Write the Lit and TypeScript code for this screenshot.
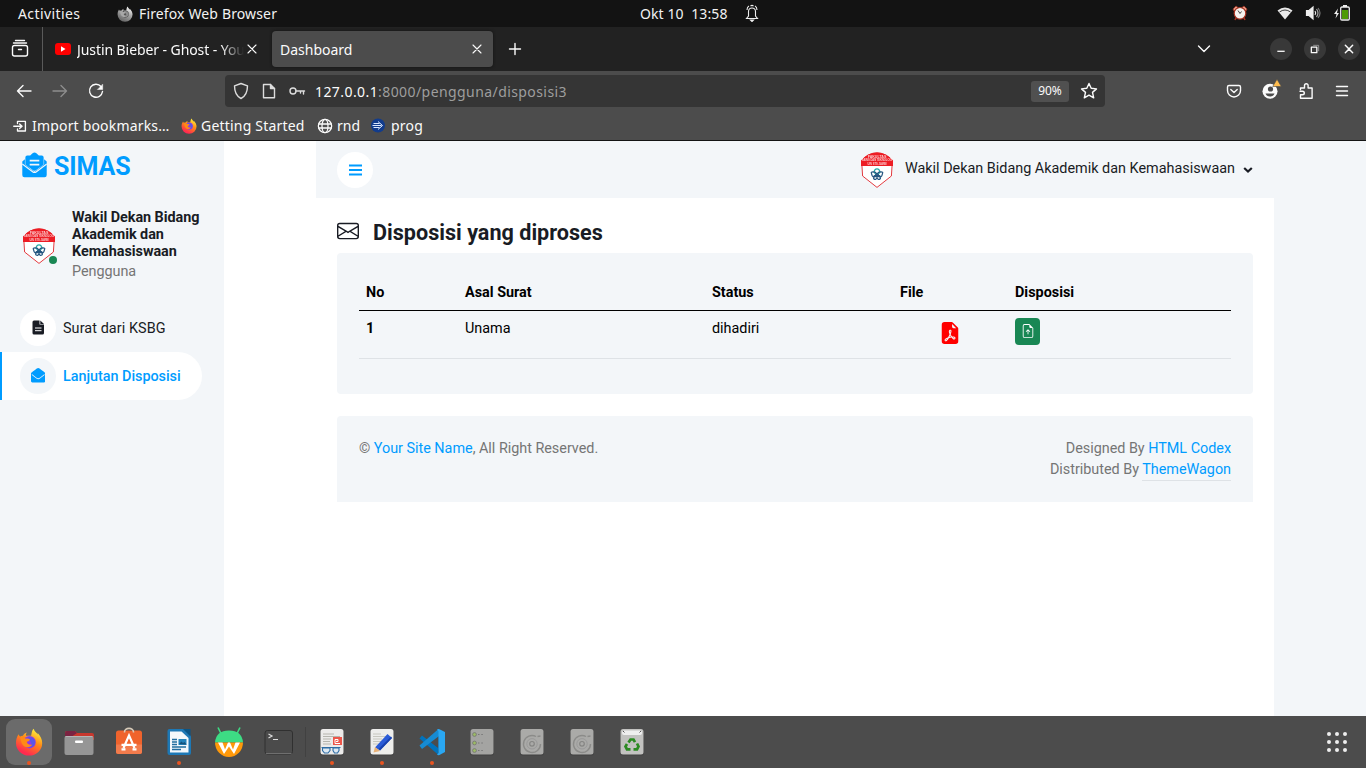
import { LitElement, html, css, svg } from "lit";
import { customElement } from "lit/decorators.js";

const firefox = (id: string, size: number, gray = false) => {
  const c = gray
    ? ["#f2f2f2", "#a8a8a8", "#6e6e6e", "#555", "#8d8d8d"]
    : ["#ffe83a", "#ff8a16", "#ff2a50", "#8c3bea", "#5a55e8"];
  return html`<svg width=${size} height=${size} viewBox="0 0 28 28">
    <defs>
      <linearGradient id=${id} x1=".8" y1="0" x2=".3" y2="1">
        <stop offset=".08" stop-color=${c[0]} /><stop offset=".45" stop-color=${c[1]} /><stop offset=".9" stop-color=${c[2]} />
      </linearGradient>
    </defs>
    <path fill="url(#${id})" d="M3.5 6.2c.4 1 .9 1.6 1.6 2.2.8-.5 1.800-.8 2.800-.7 1-1.700 2.400-2.600 4-3.100-1 1.200-1.200 2.300-.8 3.200h5c.8-3 .6-5.400 2.700-7 .4 2.600 2.400 3.600 4.100 5.600-.1-.7-.2-1.100-.4-1.700 3 3.300 4.700 6.400 4.700 10.300A13 12.500 0 0 1 1 15c0-3.500.9-6.200 2.500-8.800z" />
    <circle cx="14.500" cy="14.200" r="6.200" fill=${c[3]} />
    <path d="M12 9.500c3-1.600 7 .2 8 3.800.7 3.300-2 6.500-5.500 6.500 3.500-2.500 2-6-2.500-10.300z" fill=${c[4]} />
    <path d="M5 9.500c2-.7 4.500-.3 5.700 1.200 1.700-.2 3.300-.1 4.300.7-.4 1.300-1.800 1.900-3.200 2.400.3 2.300 2.700 3.600 5.500 2.700-2 3.500-7.200 3.700-9.400.6C6.200 15 6 12 5 9.500z" fill=${c[1]} />
  </svg>`;
};

const line = (content: unknown, size = 24, width = 1.4) =>
  html`<svg width=${size} height=${size} viewBox="0 0 24 24" fill="none" stroke="currentColor"
    stroke-width=${width} stroke-linecap="round" stroke-linejoin="round">${content}</svg>`;

const emblem = () => html`<svg width="36" height="36" viewBox="0 0 36 36">
  <path d="M2.600 8.500Q9 1 18 .8 27 1 33.400 8.500L32.400 24 18 35.400 3.600 24z" fill="#fff" stroke="#e33a40" stroke-width="1" />
  <path d="M2 14V8.500Q9 .5 18 .5T34 8.500V14z" fill="#ed1c24" />
  <text x="18" y="5.700" font-size="3.600" class="seal">FAKULTAS</text>
  <text x="18" y="9.400" font-size="2.600" class="seal">SAINS DAN TEKNOLOGI</text>
  <text x="18" y="12.700" font-size="2.600" class="seal">UIN STS JAMBI</text>
  <g fill="none" stroke="#24557f" stroke-width="1.200">
    <circle cx="18" cy="23" r="1.500" /><path d="M15 20.500Q15.500 16.800 18 16.800T21 20.500Q20 22 18 22T15 20.500z" stroke="#26a9a5" />
    <path d="M12.500 21.500Q11.500 20 14 19.800T18 22q-1 3-3 3t-2.500-3.500zM23.500 21.500q1-1.500-1.500-1.700T18 22q1 3 3 3t2.500-3.500zM14.500 25.500q0-2.500 3.500-2.500.500 3.500-1.500 4.500-2 0-2-2zM21.500 25.500q0-2.500-3.500-2.500-.500 3.500 1.500 4.500 2 0 2-2z" />
  </g>
</svg>`;

const letterIcon = (size: number) => html`<svg width=${size} height=${size} viewBox="0 0 512 512" fill="currentColor">
  <path d="M512 464c0 26.500-21.500 48-48 48H48c-26.500 0-48-21.500-48-48V200.700a48 48 0 0 1 18.400-37.800C43.200 143.500 64.500 127 164.200 54.600 185.400 39.200 227.400-.4 256 0c28.600-.4 70.600 39.200 91.800 54.600C447.500 127 468.800 143.500 493.600 162.900A48 48 0 0 1 512 200.700z" />
  <path fill="#f3f6f9" d="M448 240c-26 22-55 43-100 76-21 15-59 50-92 50s-71-35-92-50C119 283 90 262 64 240l-26-20-16 24c30 25 72 58 125 96 24 18 63 62 109 62s85-44 109-62c53-38 95-71 125-96l-16-24z" />
</svg>`;

@customElement("desktop-panel")
class DesktopPanel extends LitElement {
  static styles = css`
    :host { display: flex; height: 27px; background: #131313; color: #f2f2f2; align-items: center;
      font: 14px/27px "Noto Sans", sans-serif; white-space: pre; }
    svg { display: block; }
    span, svg { flex: none; }
    .activities { margin-left: 18px; width: 99px; letter-spacing: .4px; }
    .app { margin-left: 6px; width: 501px; letter-spacing: .14px; }
    .clock { width: 104px; letter-spacing: .1px; margin-top: -1px; }
    .bell { width: 488px; margin-top: -1px; }
    .alarm { width: 45px; margin-top: -2px; }
    .wifi { width: 28px; margin-top: -2px; }
    .sound { width: 28px; margin-top: -2px; }
    .battery { margin-top: -1px; }
  `;
  render() {
    return html`<span class="activities">Activities</span>${firefox("ffg", 16, true)}<span class="app">Firefox Web Browser</span><span class="clock">Okt 10  13:58</span><span class="bell"><svg width="16" height="18" viewBox="0 0 16 18" fill="none" stroke="#eee" stroke-width="1.100">
        <path d="M2.500 14.500h11L11.500 12V7.500C11.500 5 10 4 8 4S4.500 5 4.500 7.500V12zM3 6Q3 3 5 2M13 6Q13 3 11 2M6.500 2Q8 .8 9.500 2" /><path d="M6.500 16h3l-1.500 1.500z" fill="#eee" /></svg></span><span class="alarm"><svg width="16" height="16" viewBox="0 0 16 16">
        <path d="M1 4l3-3 2 1.500L2 6zM15 4l-3-3-2 1.500L14 6z" fill="#e99a86" stroke="#9b3322" stroke-width=".8" />
        <path d="M4 13l-1 2M12 13l1 2" stroke="#a83220" stroke-width="1.600" />
        <circle cx="8" cy="8.300" r="5.800" fill="#f4f2ee" stroke="#a83220" stroke-width="1.200" />
        <path d="M6 5.500l2 3 1.500-2" stroke="#444" fill="none" /></svg></span><span class="wifi"><svg width="16" height="16" viewBox="0 0 16 16"><path d="M.5 5.500Q8-.5 15.500 5.500L8 14.500z" fill="#e9e9e9" /><path d="M2.500 7Q8 3 13.500 7" fill="none" stroke="#131313" stroke-width=".8" /></svg></span><span class="sound"><svg width="16" height="16" viewBox="0 0 16 16" fill="none" stroke="#eee" stroke-width="1.200">
        <path d="M1.500 5.500H4L8 2v12L4 10.500H1.500z" fill="#eee" /><path d="M10 6q1.500 2 0 4" /><path d="M11.500 4q3 4 0 8" stroke="#aaa" /><path d="M13 3q4 5 0 10" stroke="#777" /></svg></span><svg class="battery" width="18" height="16" viewBox="0 0 18 16"><path d="M5 3.500L1 9h2.500L2.500 13.500 6 8H4z" fill="#eee" /><rect x="7.700" y="2" width="8.600" height="13" rx="1.200" fill="none" stroke="#eee" stroke-width="1.300" /><path d="M10 0h4v2h-4z" fill="#eee" /><path d="M9 5h6v9H9z" fill="#4e9a06" /></svg>`;
  }
}

@customElement("browser-chrome")
class BrowserChrome extends LitElement {
  static styles = css`
    :host { display: block; color: #fbfbfb; font: 14px/20px "Noto Sans", sans-serif; white-space: nowrap; }
    svg { display: block; flex: none; }
    .tabs { height: 44px; background: #222; display: flex; align-items: center; }
    .tabs > span { flex: none; }
    .recent { width: 43px; height: 44px; border-right: 1px solid #5a5a5a; display: flex; align-items: center; padding-left: 8px; box-sizing: border-box; }
    .tab { display: flex; align-items: center; height: 36px; box-sizing: border-box; }
    .name { flex: none; padding-top: 1px; }
    .first { width: 228px; padding-left: 12px; }
    .first .name { margin: 0 -6px 0 6px; width: 169px; letter-spacing: -.08px;
      mask-image: linear-gradient(90deg, #000 144px, transparent 167px); }
    .active { width: 221px; background: #4c4c4c; border-radius: 4px; padding-left: 8px; margin-left: 1px; box-shadow: 0 0 3px #111; }
    .active .name { width: 185px; letter-spacing: 0; }
    .plus { margin-left: 10px; width: 689px; }
    .chev { width: 78px; }
    .round { width: 22px; height: 22px; border-radius: 50%; background: #383838; margin-right: 12px; display: grid; place-items: center; }
    .nav { height: 70px; box-sizing: border-box; background: #4c4c4c; border-bottom: 1px solid #141414; }
    .tools { display: flex; align-items: center; height: 40px; padding-left: 12px; }
    .step { width: 36px; flex: none; }
    .dim { color: #8d8d8d; }
    .reload { width: 141px; flex: none; }
    .url { width: 880px; height: 32px; border-radius: 4px; background: #353535; display: flex; align-items: center; box-sizing: border-box; padding-left: 4px; margin-right: 117px; flex: none; }
    .slot { width: 28px; color: #ddd; }
    .address { color: #9e9e9e; width: 716px; margin-left: 2px; letter-spacing: .42px; padding-top: 1px; }
    .address b { color: #fbfbfb; font-weight: 400; }
    .zoom { width: 38px; height: 21px; border-radius: 3px; background: #505050; font-size: 12px; text-align: center; margin-right: 8px; }
    .marks { display: flex; align-items: center; height: 29px; padding-left: 10px; }
    .marks span { flex: none; margin-left: 4px; }
    .marks .m1 { width: 149px; letter-spacing: .18px; margin-left: 2px; }
    .m2 { width: 116px; letter-spacing: .2px; }
    .m3 { width: 34px; }
    .m4 { letter-spacing: .2px; }
  `;
  render() {
    const cross = svg`<path d="M8 8l8 8M16 8l-8 8" />`;
    return html`
      <div class="tabs">
        <span class="recent">${line(svg`<rect x="4.500" y="8.500" width="15" height="10.500" rx="2" /><path d="M5.500 6h13M7.500 3.500h9M10.500 12.500h3" />`)}</span>
        <span class="tab first"><svg width="16" height="12" viewBox="0 0 16 12"><rect width="16" height="12" rx="3" fill="#f00" /><path d="M6 3.300v5.400L10.500 6z" fill="#fff" /></svg>
          <span class="name">Justin Bieber - Ghost - You</span>${line(cross, 24, 1.1)}</span>
        <span class="tab active"><span class="name">Dashboard</span>${line(cross, 24, 1.1)}</span>
        <span class="plus">${line(svg`<path d="M12 6.500v11M6.500 12h11" />`)}</span>
        <span class="chev">${line(svg`<path d="M6.500 9l5.500 5.500L17.500 9" />`)}</span>
        <span class="round">${line(svg`<path d="M8 14.500h8" stroke-linecap="butt" />`, 22, 1.4)}</span>
        <span class="round">${line(svg`<path d="M8 10h6v6H8z" /><path d="M10.500 8H16v6" stroke="#999" stroke-width="1" />`, 22)}</span>
        <span class="round">${line(svg`<path d="M8 8l8 8M16 8l-8 8" />`, 22, 1.6)}</span>
      </div>
      <div class="nav">
        <div class="tools">
          <span class="step">${line(svg`<path d="M19 12H5.500M11 6.500L5.500 12l5.500 5.500" />`)}</span>
          <span class="step dim">${line(svg`<path d="M5 12h13.500M13 6.500l5.500 5.500-5.500 5.500" />`)}</span>
          <span class="reload">${line(svg`<path d="M17 7.500a6.500 6.500 0 1 0 1.500 5" /><path d="M18.700 5.500v5h-5z" fill="currentColor" stroke-width=".5" />`)}</span>
          <div class="url">
            <span class="slot">${line(svg`<path d="M12 4.500l6.500 2.300c0 6-2 10.500-6.500 12.700C7.500 17.300 5.500 12.800 5.500 6.800z" />`)}</span>
            <span class="slot">${line(svg`<path d="M6.500 5.500h7l4 4v9.300h-11z" /><path d="M13.500 5.500v4h4" fill="currentColor" />`)}</span>
            <span class="slot">${line(svg`<circle cx="8" cy="12" r="3" /><path d="M11 12h8.500M18.500 12v3M15.500 12v2" />`)}</span>
            <span class="address"><b>127.0.0.1</b>:8000/pengguna/disposisi3</span>
            <span class="zoom">90%</span>
            ${line(svg`<path d="M12 4.500l2.200 4.800 5.300.6-4 3.500 1.200 5.400-4.700-2.700-4.700 2.700 1.200-5.400-4-3.500 5.300-.6z" />`)}
          </div>
          <span class="step">${line(svg`<path d="M7 6.500h10a1.500 1.500 0 0 1 1.500 1.500v3.500a6.500 6.500 0 0 1-13 0V8A1.500 1.500 0 0 1 7 6.500z" /><path d="M8.800 10.500l3.200 3 3.200-3" />`)}</span>
          <span class="step"><svg width="24" height="24" viewBox="0 0 24 24"><circle cx="12" cy="12.200" r="7.500" fill="#fbfbfb" /><circle cx="12.500" cy="10" r="2.600" fill="#4c4c4c" /><path d="M7.500 14.500h9q-1 3-4.500 3t-4.500-3z" fill="#4c4c4c" /><path d="M19 .3l4.300 7.200h-8.600z" fill="#ffbd4f" stroke="#4c4c4c" stroke-width=".6" /></svg></span>
          <span class="step">${line(svg`<path d="M6.500 10.500V9h4V6.500a1.800 1.800 0 0 1 3.600 0V9h4v10.200H6.500v-3.400h2a1.800 1.800 0 0 0 0-3.600H6" />`)}</span>
          <span class="step">${line(svg`<path d="M6.500 7.500h11M6.500 12h11M6.500 16.500h11" />`)}</span>
        </div>
        <div class="marks">
          ${line(svg`<path d="M9 9V6.500h9.500v11.500H9v-2.500M4.500 12.300H14M11.500 9.500l3 2.800-3 2.800" />`, 20, 1.6)}
          <span class="m1">Import bookmarks…</span>
          ${firefox("ffb", 16)}
          <span class="m2">Getting Started</span>
          ${line(svg`<circle cx="12" cy="12" r="10" /><ellipse cx="12" cy="12" rx="4.500" ry="10" /><path d="M2.500 9h19M2.500 15h19" />`, 16, 1.9)}
          <span class="m3">rnd</span>
          <svg width="16" height="15" viewBox="0 0 16 15"><circle cx="7" cy="7.500" r="7" fill="#123c8c" /><path d="M1.500 7.500h9M2.500 5.500h6M2.500 9.500h6M7 3.500l4.500 4-4.500 4" stroke="#dce9ff" fill="none" /></svg>
          <span class="m4">prog</span>
        </div>
      </div>`;
  }
}

@customElement("simas-page")
class SimasPage extends LitElement {
  static styles = css`
    :host { display: flex; height: 575px; background: #f3f6f9; font: 14.4px/21.6px Roboto, sans-serif; color: #757575; }
    * { box-sizing: border-box; }
    svg { display: block; flex: none; }
    a { color: #009cff; }
    .seal { fill: #fff; font-family: "Liberation Sans", sans-serif; font-weight: 700; text-anchor: middle; opacity: .75; }
    .side { width: 224px; padding-right: 22px; }
    .brand { display: flex; align-items: center; gap: 7px; color: #009cff; font-size: 25px; font-weight: 700; line-height: 30px; padding: 11px 0 0 22px; height: 40px; letter-spacing: -.1px; }
    .brand svg { margin-top: -3px; }
    .user { display: flex; align-items: center; padding-left: 21px; margin-top: 28px; }
    .pic { position: relative; width: 36px; }
    .dot { position: absolute; width: 8px; height: 8px; border-radius: 50%; background: #198754; right: 0; bottom: 0; }
    .who { margin-left: 15px; width: 140px; color: #191c24; font-weight: 700; line-height: 17px; letter-spacing: -.04px; }
    .role { color: #757575; font-weight: 400; line-height: 21.600px; padding-top: 1px; }
    .menu { margin-top: 21px; color: #191c24; font-weight: 400; letter-spacing: .08px; }
    .item { height: 48px; display: flex; align-items: center; padding-left: 18px; border-left: 2px solid transparent; border-radius: 0 30px 30px 0; }
    .label { padding-top: 3px; }
    .on .label { padding-top: 2px; }
    .item.on { background: #fff; color: #009cff; border-color: #009cff; font-weight: 500; letter-spacing: -.03px; }
    .disc { width: 36px; height: 36px; border-radius: 50%; background: #fff; display: grid; place-items: center; margin-right: 7px; }
    .on .disc { background: #f3f6f9; }
    .content { width: 1050px; background: #fff; padding-left: 92px; }
    .bar { height: 57px; background: #f3f6f9; display: flex; align-items: center; padding: 0 21px; color: #191c24; }
    .bar .disc { color: #009cff; margin-right: auto; }
    .me { margin: -2px 8px 0 10px; }
    .body { padding: 0 21px; }
    .title { display: flex; align-items: center; gap: 14px; height: 26px; margin: 21px 0 8px; color: #191c24; font-size: 21.600px; font-weight: 700; line-height: 26px; }
    .title svg { margin-top: -3px; }
    .title span { padding-top: 2px; }
    .card { background: #f3f6f9; border-radius: 4px; height: 141px; padding: 21.600px 22px; color: #000; }
    .row { display: grid; grid-template-columns: 99px 247px 188px 115px 1fr; padding: 7px; height: 48px; border-bottom: 1px solid #dee2e6; }
    .head { height: 36px; font-weight: 700; border-color: #000; }
    .pdf { color: red; padding: 4px 0 0 39px; }
    .up { width: 25px; height: 27px; border-radius: 4px; background: #198754; color: #fff; display: grid; place-items: center; }
    .foot { margin-top: 22px; background: #f3f6f9; border-radius: 4px 4px 0 0; height: 86px; padding: 22px; display: flex; justify-content: space-between; line-height: 21px; letter-spacing: -.02px; }
    .right { text-align: right; }
    .wagon { border-bottom: 1px solid #dee2e6; padding-bottom: 2px; }
    b { font-weight: 700; }
  `;
  render() {
    return html`
      <div class="side">
        <div class="brand"><svg width="25" height="26" viewBox="0 0 26 26" preserveAspectRatio="none" fill="#009cff">
            <path d="M.3 9.500l2.700-2.200v5L13 20l10-7.700v-5l2.700 2.200v13.500a2.200 2.200 0 0 1-2.200 2.200H2.500A2.200 2.200 0 0 1 .3 23z" />
            <path d="M.3 12l10.700 7.700q2 1.500 4 0L25.700 12" fill="none" stroke="#f3f6f9" stroke-width="1.300" />
            <path fill-rule="evenodd" d="M3.500 5.500A2 2 0 0 1 5.500 3.500h3L11 1.300q2-1.600 4 0l2.500 2.200h3a2 2 0 0 1 2 2v7L14.500 18.200q-1.500 1-3 0L3.500 12.500zM8 7.800v1.800h10V7.800zm0 3.900v1.800h10v-1.800z" />
          </svg>SIMAS</div>
        <div class="user">
          <div class="pic">${emblem()}<span class="dot"></span></div>
          <div class="who">Wakil Dekan Bidang Akademik dan Kemahasiswaan<div class="role">Pengguna</div></div>
        </div>
        <div class="menu">
          <div class="item"><span class="disc"><svg width="12" height="15" viewBox="0 0 12 15"><path fill="#191c24" d="M2 .5h5.500v4H12V13a1.500 1.500 0 0 1-1.500 1.500H2A1.500 1.500 0 0 1 .5 13V2A1.500 1.500 0 0 1 2 .5zM8.300.5L12 4H8.300z" /><path d="M3 8h6.500M3 10.700h6.500" stroke="#fff" stroke-width="1" /></svg></span><span class="label">Surat dari KSBG</span></div>
          <div class="item on"><span class="disc">${letterIcon(14.4)}</span><span class="label">Lanjutan Disposisi</span></div>
        </div>
      </div>
      <div class="content">
        <div class="bar">
          <span class="disc"><svg width="13" height="12" viewBox="0 0 13 12"><path d="M0 1.500h13M0 6h13M0 10.500h13" stroke="#009cff" stroke-width="2" /></svg></span>
          ${emblem()}<span class="me">Wakil Dekan Bidang Akademik dan Kemahasiswaan</span>
          <svg width="10" height="6" viewBox="0 0 10 6"><path d="M1.200 1L5 4.500 8.800 1" fill="none" stroke="#191c24" stroke-width="2.200" /></svg>
        </div>
        <div class="body">
          <div class="title"><svg width="22" height="22" viewBox="0 0 16 16" fill="currentColor"><path d="M0 4a2 2 0 0 1 2-2h12a2 2 0 0 1 2 2v8a2 2 0 0 1-2 2H2a2 2 0 0 1-2-2V4Zm2-1a1 1 0 0 0-1 1v.217l7 4.200 7-4.200V4a1 1 0 0 0-1-1H2Zm13 2.383-4.708 2.825L15 11.105V5.383Zm-.034 6.876-5.640-3.471L8 9.583l-1.326-.795-5.640 3.470A1 1 0 0 0 2 13h12a1 1 0 0 0 .966-.741ZM1 11.105l4.708-2.897L1 5.383v5.722Z" /></svg><span>Disposisi yang diproses</span></div>
          <div class="card">
            <div class="row head"><span>No</span><span>Asal Surat</span><span>Status</span><span>File</span><span>Disposisi</span></div>
            <div class="row"><b>1</b><span>Unama</span><span>dihadiri</span>
              <span class="pdf"><svg width="22" height="22" viewBox="0 0 16 16" fill="currentColor"><path d="M5.523 12.424c.14-.082.293-.162.459-.238a7.878 7.878 0 0 1-.45.606c-.28.337-.498.516-.635.572a.266.266 0 0 1-.035.012.282.282 0 0 1-.026-.044c-.056-.11-.054-.216.04-.36.106-.165.319-.354.647-.548zm2.455-1.647c-.119.025-.237.05-.356.078a21.148 21.148 0 0 0 .5-1.050 12.045 12.045 0 0 0 .51.858c-.217.032-.436.07-.654.114zm2.525.939a3.881 3.881 0 0 1-.435-.41c.228.005.434.022.612.054.317.057.466.147.518.209a.095.095 0 0 1 .026.064.436.436 0 0 1-.06.2.307.307 0 0 1-.094.124.107.107 0 0 1-.069.015c-.09-.003-.258-.066-.498-.256zM8.278 6.970c-.04.244-.108.524-.2.829a4.860 4.860 0 0 1-.089-.346c-.076-.353-.087-.63-.046-.822.038-.177.11-.248.196-.283a.517.517 0 0 1 .145-.04c.013.03.028.092.032.198.005.122-.007.277-.038.465z" /><path fill-rule="evenodd" d="M4 0h5.293A1 1 0 0 1 10 .293L13.707 4a1 1 0 0 1 .293.707V14a2 2 0 0 1-2 2H4a2 2 0 0 1-2-2V2a2 2 0 0 1 2-2zm5.500 1.500v2a1 1 0 0 0 1 1h2l-3-3zM4.165 13.668c.09.18.23.343.438.419.207.075.412.04.58-.03.318-.13.635-.436.926-.786.333-.401.683-.927 1.021-1.510a11.651 11.651 0 0 1 1.997-.406c.3.383.61.713.91.950.28.22.603.403.934.417a.856.856 0 0 0 .51-.138c.155-.101.27-.247.354-.416.09-.181.145-.37.138-.563a.844.844 0 0 0-.2-.518c-.226-.27-.596-.4-.96-.465a5.760 5.760 0 0 0-1.335-.05 10.954 10.954 0 0 1-.98-1.686c.25-.66.437-1.284.52-1.794.036-.218.055-.426.048-.614a1.238 1.238 0 0 0-.127-.538.7.7 0 0 0-.477-.365c-.202-.043-.41 0-.601.077-.377.15-.576.47-.651.823-.073.34-.04.736.046 1.136.088.406.238.848.43 1.295a19.697 19.697 0 0 1-1.062 2.227 7.662 7.662 0 0 0-1.482.645c-.37.22-.699.48-.897.787-.21.326-.275.714-.08 1.103z" /></svg></span>
              <span><span class="up"><svg width="14" height="14" viewBox="0 0 16 16" fill="currentColor"><path d="M8.500 11.500a.5.5 0 0 1-1 0V7.707L6.354 8.854a.5.5 0 1 1-.708-.708l2-2a.5.5 0 0 1 .708 0l2 2a.5.5 0 0 1-.708.708L8.500 7.707V11.500z" /><path d="M14 14V4.500L9.500 0H4a2 2 0 0 0-2 2v12a2 2 0 0 0 2 2h8a2 2 0 0 0 2-2zM9.500 3A1.500 1.500 0 0 0 11 4.500h2V14a1 1 0 0 1-1 1H4a1 1 0 0 1-1-1V2a1 1 0 0 1 1-1h5.500v2z" /></svg></span></span>
            </div>
          </div>
          <div class="foot"><div>© <a>Your Site Name</a>, All Right Reserved.</div>
            <div class="right">Designed By <a>HTML Codex</a><br />Distributed By <a class="wagon">ThemeWagon</a></div></div>
        </div>
      </div>`;
  }
}

const paper = (fill: string, content: unknown) =>
  svg`<rect x="4" y="3" width="24" height="26.500" rx="2.500" fill="#333" opacity=".4" /><rect x="4.500" y="3" width="23" height="25.500" rx="2.500" fill=${fill} />${content}`;
const drive = paper("#aaaaa8", svg`<path d="M20 10.500a8.500 8.500 0 1 0 4.500 7.500M24.500 10l-3 .5" fill="none" stroke="#8b8b89" stroke-width="1.400" /><circle cx="16" cy="17.800" r="5.200" fill="none" stroke="#999" /><circle cx="16" cy="17.800" r="2.300" fill="none" stroke="#858583" stroke-width="1.200" />`);

const FILES = svg`<path d="M2 7a2 2 0 0 1 2-2h8l2 2h15a2 2 0 0 1 2 2v5H2z" fill="#c8382e" /><path d="M2 8q0-3 2-3h8l2 2-6 4H2z" fill="#7a2342" /><rect x="1.500" y="10" width="29" height="19" rx="2" fill="#969696" /><path d="M2.500 10.500h27" stroke="#b5b5b5" /><rect x="12" y="14.500" width="8" height="2.600" rx="1" fill="#fff" />`;
const STORE = svg`<rect x="3" y="4.500" width="26" height="23.500" rx="2.500" fill="#f0632c" /><path d="M3 18.500h26v7a2.500 2.500 0 0 1-2.500 2.500h-21A2.500 2.500 0 0 1 3 25.500z" fill="#f27b4c" /><path d="M11.500 6.500V6a4.500 3.600 0 0 1 9 0v.5" fill="none" stroke="#d8cbb9" stroke-width="1.600" /><path d="M10.500 22L16 9.500 21.500 22M8.500 18.800h15M8.500 23.300h4M19.500 23.300h4" fill="none" stroke="#fff" stroke-width="2.200" />`;
const WRITER = svg`<path d="M6.500 3H21l7 7v17a2 2 0 0 1-2 2H6.500a2 2 0 0 1-2-2V5a2 2 0 0 1 2-2z" fill="#1d78b5" /><path d="M7 5.500h11.500L25.500 12v14.500H7z" fill="#f3f8fb" /><path d="M20 3h7.500v7.500z" fill="#0b5586" /><path d="M9 13.500h5M9 16h5M9 18.500h5M9 21h14M9 23.500h9" stroke="#216d9f" stroke-width="1.300" /><rect x="15.500" y="13" width="8" height="6" fill="#2383bb" /><path d="M16 18l2.500-2.500L20 17l1.500-1 2 2.500z" fill="#15537c" />`;
const WAY = svg`<path d="M2 16.500Q3 4.500 16 4.500T30 16.500z" fill="#3ddc84" /><path d="M8 7.500L5 1.500M24 7.500l3-6" stroke="#3ddc84" stroke-width="1.600" /><path d="M2 16.500h28a14 14.500 0 0 1-28 0z" fill="#ff990a" /><path d="M5 16.500h4.500l2.500 7 3-7h2l3 7 2.500-7H27l-6 11.500L16 20.500 11 28z" fill="#fff" />`;
const TERM = svg`<rect x="2" y="4.500" width="27.500" height="23.500" rx="2.500" fill="#4b4b4b" stroke="#303030" /><path d="M3 27.500h25.500" stroke="#858585" stroke-width=".7" /><path d="M5.500 8l3.500 2-3.500 2M10 13.500h5" fill="none" stroke="#ddd" stroke-width="1.200" />`;
const VIEWER = paper("#ecebea", svg`<path d="M7 8h11M7 10.500h17M7 13h8M7 15.500h7M7 18h8" stroke="#b5b5ae" stroke-width="1.200" /><rect x="17" y="11" width="9" height="8" fill="#ed564a" /><path d="M20 15.500h2v-2h-3v4h5" stroke="#fff" fill="none" /><path d="M5.500 21.500h19M6.500 22h7.500v2.500l-2 2.500H8.500l-2-2.500zM17 22h6v2.500l-1.500 2.500h-3L17 24.500z" fill="#dce8f2" stroke="#2e6ca4" stroke-width="1.100" />`);
const EDITOR = paper("#ededeb", svg`<path d="M7 8h8M7 10.500h13M7 13h9M7 15.500h8M7 18h6" stroke="#c7c7bf" /><path d="M9 21.500L21.500 8l4.500 4L14 24.500z" fill="#2a5bd7" /><path d="M12.500 23L25 10.500l1 1.500L14 24.500z" fill="#1741ad" /><path d="M9 21l5 4-6.500 1.500z" fill="#e7b177" />`);
const CODE = svg`<path d="M22.500 3v26L3.500 12.500 6 9.500l18 14z" fill="#0073bd" /><path d="M22.500 3L3.500 19.500 6 23 25 8.500z" fill="#168bd3" /><path d="M21 3.500q1.200-.8 2.500-.3L29 6v20l-5.500 3q-1.300.5-2.500-.5l1.500-1.500V5.500z" fill="#2aa7f2" />`;
const SERVER = paper("#a4a4a2", svg`<g fill="#9cbb63" stroke="#777" stroke-width=".9"><circle cx="8.500" cy="8.500" r="1.900" /><circle cx="8.500" cy="17" r="1.900" /><circle cx="8.500" cy="24.500" r="1.900" /></g><path d="M12 8.500h5M12 17h5M12 24.500h5" stroke="#777" stroke-width="1.200" stroke-dasharray="1.500 1.800" />`);
const TRASH = paper("#c2c2c0", svg`<rect x="6" y="4.500" width="20" height="4.500" rx="2" fill="#efefef" /><path d="M7 5l1.500 1.500M25 5l-1.500 1.500" stroke="#555" /><g fill="none" stroke="#2b8a22" stroke-width="2.700"><path d="M12.500 16.500l2-3h3l1.500 2.700" /><path d="M21 17.500l1.500 3-1.500 2.800h-3.500" /><path d="M14.500 23.300H11l-1.500-2.800L11 18" /></g>`);

@customElement("app-dock")
class AppDock extends LitElement {
  static styles = css`
    :host { display: flex; height: 52px; background: #4c4c4c; padding-left: 4px; }
    .cell { width: 50px; height: 52px; display: flex; flex-direction: column; align-items: center; }
    .tile { margin-top: 3px; width: 46px; height: 46px; border-radius: 9px; display: grid; place-items: center; box-sizing: border-box; }
    .focus { background: #6b6b6b; }
    .run { width: 4px; height: 4px; border-radius: 50%; background: #e95420; margin-top: -4px; }
    .sep { width: 1px; height: 30px; background: #414141; margin: 11px 1px; }
    .grid { margin: 16px 19px 0 auto; }
  `;
  render() {
    const cell = (icon: unknown, run = false) =>
      html`<div class="cell"><div class="tile"><svg width="32" height="32" viewBox="0 0 32 32">${icon}</svg></div>${run ? html`<i class="run"></i>` : ""}</div>`;
    return html`
      <div class="cell"><div class="tile focus">${firefox("ffd", 28)}</div><i class="run"></i></div>
      ${cell(FILES)}${cell(STORE)}${cell(WRITER, true)}${cell(WAY)}${cell(TERM)}
      <div class="sep"></div>
      ${cell(VIEWER, true)}${cell(EDITOR, true)}${cell(CODE, true)}${cell(SERVER)}${cell(drive)}${cell(drive)}${cell(TRASH)}
      <svg class="grid" width="20" height="20" viewBox="0 0 20 20" fill="#eee">
        ${[2, 10, 18].map((y) => [2, 10, 18].map((x) => svg`<circle cx=${x} cy=${y} r="2" />`))}
      </svg>`;
  }
}

@customElement("app-root")
class AppRoot extends LitElement {
  static styles = css`:host { display: block; width: 1366px; height: 768px; overflow: hidden; }`;
  render() {
    return html`<desktop-panel></desktop-panel><browser-chrome></browser-chrome><simas-page></simas-page><app-dock></app-dock>`;
  }
}
